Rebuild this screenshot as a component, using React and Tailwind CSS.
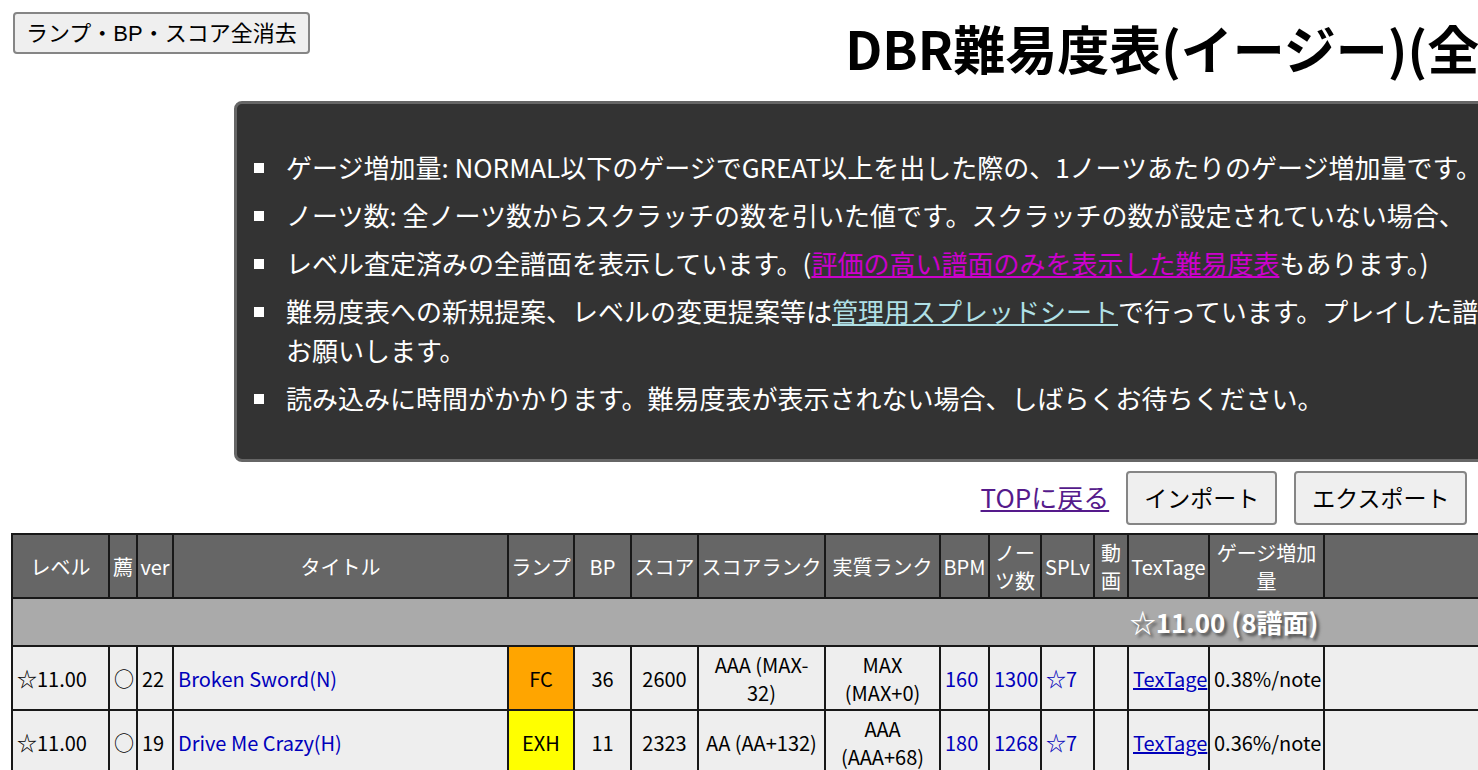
const columns = [
  { label: 'レベル', col: 'w-[97px]' },
  { label: '薦', col: 'w-[28px]' },
  { label: 'ver', col: 'w-[36px]' },
  { label: 'タイトル', col: 'w-[335px]' },
  { label: 'ランプ', col: 'w-[66px]' },
  { label: 'BP', col: 'w-[57px]' },
  { label: 'スコア', col: 'w-[67px]' },
  { label: 'スコアランク', col: 'w-[127px]' },
  { label: '実質ランク', col: 'w-[115px]' },
  { label: 'BPM', col: 'w-[49px]' },
  { label: 'ノーツ数', col: 'w-[52px]' },
  { label: 'SPLv', col: 'w-[53px]' },
  { label: '動画', col: 'w-[34px]' },
  { label: 'TexTage', col: 'w-[81px]' },
  { label: 'ゲージ増加量', col: 'w-[115px]' },
  { label: '', col: '' },
];

const charts = [
  {
    level: '☆11.00', rec: '○', ver: '22', title: 'Broken Sword(N)',
    lamp: 'FC', lampColor: 'bg-[#ffa500]', bp: '36', score: '2600',
    rank: 'AAA (MAX-32)', realRank: 'MAX (MAX+0)',
    bpm: '160', notes: '1300', sp: '☆7', gauge: '0.38%/note',
  },
  {
    level: '☆11.00', rec: '○', ver: '19', title: 'Drive Me Crazy(H)',
    lamp: 'EXH', lampColor: 'bg-[#ffff00]', bp: '11', score: '2323',
    rank: 'AA (AA+132)', realRank: 'AAA (AAA+68)',
    bpm: '180', notes: '1268', sp: '☆7', gauge: '0.36%/note',
  },
];

function Button({ className, children }) {
  return (
    <button
      type="button"
      className={`rounded-[4px] border-2 border-[#858585] bg-[#efefef] text-black font-['Liberation_Sans','Noto_Sans_CJK_JP',sans-serif] whitespace-nowrap ${className}`}
    >
      {children}
    </button>
  );
}

function Note({ children }) {
  return (
    <li className="flex items-start gap-[22px]">
      <span className="mt-[16px] size-[10px] shrink-0 bg-white" />
      <p>{children}</p>
    </li>
  );
}

function Cell({ className = '', children }) {
  return <td className={`border-2 border-[#181818] px-[4px] pt-[2px] pb-0 ${className}`}>{children}</td>;
}

function ChartRow({ chart }) {
  return (
    <tr className="h-16 bg-[#eeeeee]">
      <Cell>{chart.level}</Cell>
      <Cell className="whitespace-nowrap">{chart.rec}</Cell>
      <Cell>{chart.ver}</Cell>
      <Cell className="text-[#0000bb]">{chart.title}</Cell>
      <Cell className={`text-center ${chart.lampColor}`}>{chart.lamp}</Cell>
      <Cell className="text-center">{chart.bp}</Cell>
      <Cell className="text-center">{chart.score}</Cell>
      <Cell className="text-center">{chart.rank}</Cell>
      <Cell className="text-center">{chart.realRank}</Cell>
      <Cell className="text-[#0000bb]">{chart.bpm}</Cell>
      <Cell className="text-[#0000bb]">{chart.notes}</Cell>
      <Cell className="text-[#0000bb]">{chart.sp}</Cell>
      <Cell />
      <Cell>
        <a href="#textage" className="text-[#0000bb] underline">TexTage</a>
      </Cell>
      <Cell className="whitespace-nowrap">{chart.gauge}</Cell>
      <Cell />
    </tr>
  );
}

export default function App() {
  return (
    <div className="min-h-screen overflow-hidden bg-white font-['Noto_Sans_CJK_JP',sans-serif] text-black">
      <div className="min-w-[2448px] px-[11px]">
        <header className="grid h-[101px] grid-cols-[1fr_auto_1fr] items-start">
          <Button className="mt-[12px] ml-[2px] h-[42px] justify-self-start px-[11px] text-[22px]">
            ランプ・BP・スコア全消去
          </Button>
          <h1 className="mt-[9px] text-[52px] leading-[78px] font-bold">
            DBR難易度表(イージー)(全譜面)
          </h1>
        </header>

        <section className="mx-[223px] rounded-[8px] border-[3px] border-[#666666] bg-[#333333] pt-[43px] pb-[42px] pl-[17px] text-[26px] leading-[39px] text-white">
          <ul className="flex flex-col gap-[9px]">
            <Note>ゲージ増加量: NORMAL以下のゲージでGREAT以上を出した際の、1ノーツあたりのゲージ増加量です。</Note>
            <Note>ノーツ数: 全ノーツ数からスクラッチの数を引いた値です。スクラッチの数が設定されていない場合、</Note>
            <Note>
              レベル査定済みの全譜面を表示しています。(
              <a href="#recommended" className="text-[#cc00cc] underline">評価の高い譜面のみを表示した難易度表</a>
              もあります。)
            </Note>
            <Note>
              難易度表への新規提案、レベルの変更提案等は
              <a href="#sheet" className="text-[#b0e0e6] underline">管理用スプレッドシート</a>
              で行っています。プレイした譜面の提案を
              <br />
              お願いします。
            </Note>
            <Note>読み込みに時間がかかります。難易度表が表示されない場合、しばらくお待ちください。</Note>
          </ul>
        </section>

        <nav className="flex items-center justify-center gap-[17px] pt-[9px] pb-[8px]">
          <a href="#top" className="pb-[4px] text-[26px] leading-[39px] text-[#551a8b] underline">TOPに戻る</a>
          <Button className="h-[54px] px-[16px] pt-[2px] text-[23px]">インポート</Button>
          <Button className="h-[54px] px-[16px] pt-[2px] text-[23px]">エクスポート</Button>
        </nav>

        <table className="w-full table-fixed border-collapse border-2 border-[#181818] text-[20px] leading-[28px]">
          <colgroup>
            {columns.map((c, i) => (
              <col key={i} className={c.col} />
            ))}
          </colgroup>
          <thead>
            <tr className="h-16 bg-[#666666] text-white">
              {columns.map((c, i) => (
                <th key={i} className="border-2 border-[#181818] px-[2px] pt-[2px] pb-0 font-normal">
                  {c.label}
                </th>
              ))}
            </tr>
          </thead>
          <tbody>
            <tr className="h-12 bg-[#aaaaaa] text-white">
              <th
                colSpan={16}
                className="border-2 border-[#181818] p-0 pb-[2px] text-[26px] leading-[39px] font-bold [text-shadow:3px_3px_3px_#555]"
              >
                ☆11.00 (8譜面)
              </th>
            </tr>
            {charts.map((chart) => (
              <ChartRow key={chart.title} chart={chart} />
            ))}
          </tbody>
        </table>
      </div>
    </div>
  );
}
